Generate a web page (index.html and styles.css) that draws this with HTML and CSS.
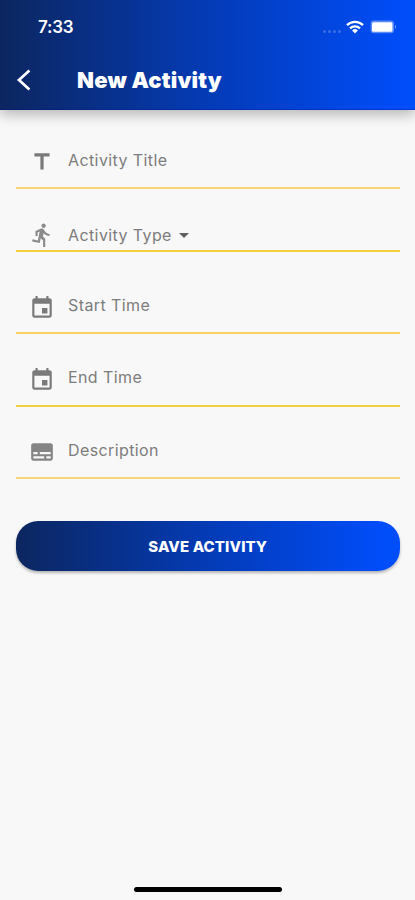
FILE: index.html
```html
<!DOCTYPE html>
<html lang="en">
<head>
<meta charset="utf-8">
<title>New Activity</title>
<link rel="stylesheet" href="styles.css">
</head>
<body>
<div class="screen">
  <header class="header">
    <div class="status">
      <span class="clock">7:33</span>
      <div class="indicators">
        <span class="dots"><i></i><i></i><i></i><i></i></span>
        <svg class="wifi" viewBox="0 0 18 14"><g fill="none" stroke="#fff" stroke-width="2.2"><path d="M1 5.1a11.5 11.5 0 0 1 16 0"/><path d="M4 8.4a7.2 7.2 0 0 1 10 0"/></g><path fill="#fff" d="M6.1 10.5a4.2 4.2 0 0 1 5.8 0L9 13.6z"/></svg>
        <svg class="battery" viewBox="0 0 27 14"><rect x=".6" y=".6" width="23.4" height="12.6" rx="3.2" fill="#fff" fill-opacity=".35"/><rect x="2" y="2.2" width="20.4" height="9.6" rx="1.5" fill="#fff"/><path d="M25 4.8q2 2.200 0 4.400z" fill="#fff" fill-opacity=".5"/></svg>
      </div>
    </div>
    <div class="bar">
      <svg class="back" viewBox="0 0 16 24"><path d="M13.400 2.600 3 12l10.400 9.400" fill="none" stroke="#fff" stroke-width="2.700"/></svg>
      <h1>New Activity</h1>
    </div>
  </header>
  <main class="form">
    <div class="field field-title">
      <svg class="icon" viewBox="0 0 24 24"><path d="M5 4v3h5.500v12h3V7H19V4z"/></svg>
      <span class="label">Activity Title</span>
    </div>
    <div class="field field-type">
      <svg class="icon icon-run" viewBox="0 0 24 24"><path d="M13.490 5.480c1.100 0 2-.9 2-2s-.9-2-2-2-2 .9-2 2 .9 2 2 2zm-3.600 13.900 1-4.400 2.100 2v6h2v-7.500l-2.100-2 .6-3c1.300 1.500 3.300 2.500 5.500 2.500v-2c-1.900 0-3.500-1-4.300-2.400l-1-1.600c-.4-.6-1-1-1.700-1-.3 0-.5.1-.8.1l-5.200 2.200v4.700h2v-3.400l1.800-.7-1.600 8.100-4.900-1-.4 2z"/></svg>
      <span class="label">Activity Type</span>
      <svg class="caret" viewBox="0 0 10 5"><path d="M0 0h10L5 5z"/></svg>
    </div>
    <div class="field field-start">
      <svg class="icon" viewBox="0 0 24 24"><path d="M17 12h-5v5h5zM16 1v2H8V1H6v2H5c-1.110 0-1.990.9-1.990 2L3 19c0 1.100.89 2 2 2h14c1.100 0 2-.9 2-2V5c0-1.100-.9-2-2-2h-1V1zm3 18H5V8h14z"/></svg>
      <span class="label">Start Time</span>
    </div>
    <div class="field field-end">
      <svg class="icon" viewBox="0 0 24 24"><path d="M17 12h-5v5h5zM16 1v2H8V1H6v2H5c-1.110 0-1.990.9-1.990 2L3 19c0 1.100.89 2 2 2h14c1.100 0 2-.9 2-2V5c0-1.100-.9-2-2-2h-1V1zm3 18H5V8h14z"/></svg>
      <span class="label">End Time</span>
    </div>
    <div class="field field-desc">
      <svg class="icon icon-desc" viewBox="0 0 24 24"><path d="M20 4H4c-1.100 0-2 .9-2 2v12c0 1.100.9 2 2 2h16c1.100 0 2-.9 2-2V6c0-1.100-.9-2-2-2zM4 12h4v2H4zm10 6H4v-2h10zm6 0h-4v-2h4zm0-4H10v-2h10z"/></svg>
      <span class="label">Description</span>
    </div>
    <button class="save" type="button">SAVE ACTIVITY</button>
  </main>
  <div class="home"></div>
</div>
</body>
</html>
```
FILE: styles.css
```css
* { box-sizing: border-box; }
body { margin: 0; font-family: Inter, "Liberation Sans", sans-serif; background: #f8f8f8; }
.screen { display: flex; flex-direction: column; width: 415px; height: 900px; overflow: hidden; }
.header { height: 110px; flex: none; color: #fff; background: linear-gradient(90deg, #0c265f, #043bb6 50%, #004dfa 98%); border-bottom: 1px solid rgba(0, 10, 150, .3); box-shadow: 0 5px 12px rgba(0, 0, 0, .26); }
.status { display: flex; justify-content: space-between; align-items: center; height: 54px; padding: 0 18px 0 38px; }
.clock { font-size: 17px; font-weight: 600; letter-spacing: -.2px; }
.indicators { display: flex; align-items: center; }
.dots { display: flex; gap: 2px; margin: 8px 5px 0 0; }
.dots i { width: 3px; height: 3px; border-radius: 50%; background: rgba(255, 255, 255, .22); }
.wifi { width: 18px; height: 14px; margin-right: 6px; }
.battery { width: 27px; height: 14px; }
.bar { display: flex; align-items: center; height: 52px; padding-left: 16px; }
.back { width: 16px; height: 24px; margin-right: 45px; }
h1 { margin: 0; font-size: 22px; line-height: 30px; font-weight: 900; letter-spacing: .2px; white-space: nowrap; }
.form { flex: 1; padding: 23px 15.500px 0 16px; }
.field { display: flex; align-items: center; padding-left: 13px; border-bottom: 2px solid #fbd674; }
.field-title { height: 56px; }
.field-type { height: 63px; padding-top: 31px; border-color: #f5cf3a; }
.field-start { height: 82px; padding-top: 27px; border-color: #fbd160; }
.field-end { height: 73px; padding-top: 16px; border-color: #f0d140; }
.field-desc { height: 72px; padding-top: 16px; border-color: #f7d679; }
.icon { width: 26px; height: 26px; margin-right: 13px; fill: #7a7a7a; transform: translateY(2px); }
.icon-run { fill: #8b8b8b; transform: none; }
.icon-desc { fill: #858585; }
.label { font-size: 16px; line-height: 22px; font-weight: 400; letter-spacing: .4px; color: #7d7d7d; white-space: nowrap; }
.field-start .label, .field-end .label { transform: translateY(-1px); }
.caret { width: 10px; height: 5px; margin-left: 7px; fill: #606060; }
.save { display: flex; align-items: center; justify-content: center; width: 100%; height: 50px; margin-top: 42px; padding: 0; border: 0; border-radius: 22px; color: #fff; background: linear-gradient(90deg, #0c265f, #043bb6 50%, #004dfa 96%); box-shadow: 0 2px 3px rgba(0, 0, 0, .28); font: 800 15px Inter, sans-serif; letter-spacing: .1px; }
.home { flex: none; width: 148px; height: 5px; margin: 0 auto 8px; border-radius: 3px; background: #000; }
```
